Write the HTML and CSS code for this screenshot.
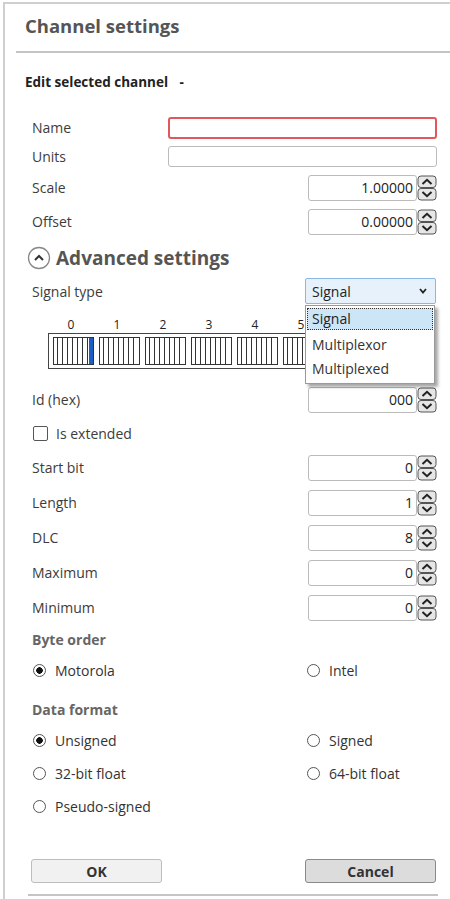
FILE: index.html
```html
<!DOCTYPE html>
<html lang="en">
<head>
  <meta charset="UTF-8">
  <title>Channel settings</title>
  <link rel="stylesheet" href="styles.css">
</head>
<body>
  <svg width="0" height="0" style="position:absolute">
    <symbol id="spin" viewBox="0 0 20 26">
      <rect x="1" y="1" width="18" height="11.5" rx="3" fill="#e6e6e6" stroke="#555"/>
      <path d="M5.5 9 L10 4.8 L14.5 9" stroke="#222" stroke-width="2" fill="none"/>
      <rect x="1" y="13.5" width="18" height="11.5" rx="3" fill="#e6e6e6" stroke="#555"/>
      <path d="M5.5 17 L10 21.2 L14.5 17" stroke="#222" stroke-width="2" fill="none"/>
    </symbol>
  </svg>

  <div class="panel">
    <div class="header"><h1>Channel settings</h1></div>
    <h2 class="subtitle">Edit selected channel <span class="dash">-</span></h2>

    <div class="body">
      <!-- Basic fields -->
      <div class="row row-name">
        <span class="label">Name</span>
        <div class="text invalid"></div>
      </div>
      <div class="row row-units">
        <span class="label">Units</span>
        <div class="text"></div>
      </div>
      <div class="row row-spin">
        <span class="label">Scale</span>
        <div class="spinner"><div class="spin-value">1.00000</div><svg class="spin-btn"><use href="#spin"/></svg></div>
      </div>
      <div class="row row-spin short">
        <span class="label">Offset</span>
        <div class="spinner"><div class="spin-value">0.00000</div><svg class="spin-btn"><use href="#spin"/></svg></div>
      </div>

      <!-- Advanced -->
      <div class="advanced">
        <svg class="collapse" width="24" height="24" viewBox="0 0 24 24">
          <circle cx="12" cy="12" r="10.5" fill="#fff" stroke="#888" stroke-width="1.3"/>
          <path d="M8 14 L12 10 L16 14" stroke="#333" stroke-width="2" fill="none"/>
        </svg>
        <span>Advanced settings</span>
      </div>

      <div class="row row-select">
        <span class="label">Signal type</span>
        <div class="select">
          <span>Signal</span>
          <svg width="8" height="6" viewBox="0 0 8 6"><path d="M1 1 L4 4.5 L7 1" stroke="#222" stroke-width="1.8" fill="none"/></svg>
          <ul class="options">
            <li class="active">Signal</li>
            <li>Multiplexor</li>
            <li>Multiplexed</li>
          </ul>
        </div>
      </div>

      <div class="bits">
        <div class="bit-numbers">
          <span>0</span><span>1</span><span>2</span><span>3</span><span>4</span><span>5</span><span>6</span><span>7</span>
        </div>
        <div class="bit-box" id="bitBox"></div>
      </div>

      <div class="row row-spin">
        <span class="label">Id (hex)</span>
        <div class="spinner"><div class="spin-value">000</div><svg class="spin-btn"><use href="#spin"/></svg></div>
      </div>
      <div class="row row-check">
        <span class="checkbox"></span>
        <span class="label">Is extended</span>
      </div>
      <div class="row row-spin">
        <span class="label">Start bit</span>
        <div class="spinner"><div class="spin-value">0</div><svg class="spin-btn"><use href="#spin"/></svg></div>
      </div>
      <div class="row row-spin">
        <span class="label">Length</span>
        <div class="spinner"><div class="spin-value">1</div><svg class="spin-btn"><use href="#spin"/></svg></div>
      </div>
      <div class="row row-spin">
        <span class="label">DLC</span>
        <div class="spinner"><div class="spin-value">8</div><svg class="spin-btn"><use href="#spin"/></svg></div>
      </div>
      <div class="row row-spin">
        <span class="label">Maximum</span>
        <div class="spinner"><div class="spin-value">0</div><svg class="spin-btn"><use href="#spin"/></svg></div>
      </div>
      <div class="row row-spin">
        <span class="label">Minimum</span>
        <div class="spinner"><div class="spin-value">0</div><svg class="spin-btn"><use href="#spin"/></svg></div>
      </div>

      <!-- Byte order -->
      <div class="group-title">Byte order</div>
      <div class="radio-grid">
        <label class="radio checked">Motorola</label>
        <label class="radio">Intel</label>
      </div>

      <!-- Data format -->
      <div class="group-title second">Data format</div>
      <div class="radio-grid tall">
        <label class="radio checked">Unsigned</label>
        <label class="radio">Signed</label>
        <label class="radio">32-bit float</label>
        <label class="radio">64-bit float</label>
        <label class="radio">Pseudo-signed</label>
      </div>

      <div class="buttons">
        <button class="btn">OK</button>
        <button class="btn btn-default">Cancel</button>
      </div>
    </div>
    <div class="footer-line"></div>
  </div>

  <script>
    // build the 8 bytes x 8 bits grid
    var box = document.getElementById('bitBox');
    for (var b = 0; b < 8; b++) {
      var cell = document.createElement('div');
      cell.className = 'byte';
      for (var i = 0; i < 8; i++) {
        var bit = document.createElement('span');
        bit.className = 'bit';
        if (b === 0 && i === 7) bit.className += ' on';
        cell.appendChild(bit);
      }
      box.appendChild(cell);
    }
  </script>
</body>
</html>
```

FILE: styles.css
```css
body {
  margin: 0;
  font-family: "Open Sans", "Noto Sans", Arial, sans-serif;
  font-size: 14px;
  color: #3a3a3a;
  background: #fff;
}
.panel {
  margin: 2px 0 0 3px;
  border-top: 2px solid #cfcfcf;
  border-left: 2px solid #cfcfcf;
  height: 897px;
  position: relative;
}
.header {
  margin-left: 11px;
  height: 47px;
  border-bottom: 2px solid #c4c4c4;
}
.header h1 {
  margin: 0;
  padding-left: 9px;
  font-size: 18.5px;
  line-height: 44px;
  color: #555;
}
.subtitle {
  margin: 0;
  padding-left: 20px;
  font-size: 13.5px;
  line-height: 59px;
  height: 59px;
  color: #222;
}
.subtitle .dash {
  margin-left: 8px;
}
.body {
  padding: 0 13px 0 27px;
}
.row {
  display: flex;
  align-items: center;
  justify-content: space-between;
  height: 35px;
}
.row-name {
  height: 31px;
}
.row-units {
  height: 27px;
}
.row.short {
  height: 33px;
}
.label {
  color: #3c3c3c;
}
.text {
  width: 267px;
  height: 19px;
  border: 1px solid #bbb;
  border-radius: 3px;
}
.text.invalid {
  border: 2px solid #e0585c;
  width: 265px;
  height: 18px;
}
.spinner {
  display: flex;
  align-items: center;
}
.spin-value {
  width: 104px;
  height: 24px;
  border: 1px solid #bbb;
  border-radius: 3px;
  text-align: right;
  padding-right: 3px;
  line-height: 24px;
  color: #222;
  font-size: 14px;
}
.spin-btn {
  width: 20px;
  height: 26px;
}
.advanced {
  display: flex;
  align-items: center;
  height: 40px;
  margin-left: -5px;
}
.advanced span {
  margin-left: 5px;
  font-size: 19px;
  font-weight: bold;
  color: #555;
}
.row-select {
  height: 26px;
}
.select {
  position: relative;
  width: 115px;
  height: 24px;
  border: 1px solid #88b8e6;
  border-radius: 2px;
  background: #e6f1fb;
  padding: 0 8px 0 6px;
  display: flex;
  align-items: center;
  justify-content: space-between;
  margin-right: 1px;
  color: #222;
}
.options {
  position: absolute;
  top: 26px;
  left: -1px;
  width: 128px;
  margin: 0;
  padding: 1px 0 2px;
  list-style: none;
  background: #fff;
  border: 1px solid #9a9a9a;
  box-shadow: 3px 3px 3px rgba(0,0,0,0.35);
  z-index: 2;
}
.options li {
  height: 24px;
  line-height: 24px;
  padding-left: 6px;
  color: #333;
}
.options li.active {
  height: 20px;
  line-height: 20px;
  margin: 1px 1px 3px;
  padding-left: 4px;
  background: #cde6f7;
  border: 1px dotted #333;
  color: #222;
}
.bits {
  margin-left: 16px;
  padding-top: 14px;
  height: 64px;
}
.bit-numbers {
  display: flex;
  padding-left: 5px;
  height: 15px;
}
.bit-numbers span {
  width: 46px;
  text-align: center;
  font-size: 12px;
  line-height: 14px;
  color: #222;
  margin-left: -5px;
  margin-right: 5px;
}
.bit-box {
  display: flex;
  gap: 5px;
  width: fit-content;
  border: 1.5px solid #444;
  padding: 3px 4px;
  height: 28px;
}
.byte {
  display: flex;
  border: 1px solid #333;
  border-right: none;
  height: 26px;
}
.bit {
  width: 3px;
  border-right: 1px solid #333;
  margin-right: 1px;
}
.bit:last-child {
  margin-right: 0;
  width: 4px;
}
.bit.on {
  background: #1b5fc4;
}
.row-check {
  justify-content: flex-start;
  height: 33px;
}
.checkbox {
  width: 13px;
  height: 13px;
  border: 1px solid #555;
  border-radius: 2px;
  margin: 0 8px 0 1px;
}
.group-title {
  height: 30px;
  line-height: 30px;
  font-weight: bold;
  color: #666;
}
.group-title.second {
  margin-top: 11px;
  height: 28px;
  line-height: 28px;
}
.radio-grid {
  display: grid;
  grid-template-columns: 274px 1fr;
  grid-auto-rows: 30px;
}
.radio-grid.tall {
  grid-auto-rows: 33px;
}
.radio {
  display: flex;
  align-items: center;
  color: #333;
}
.radio::before {
  content: "";
  width: 13px;
  height: 13px;
  border: 1px solid #555;
  border-radius: 50%;
  margin: 0 9px 0 1px;
  box-sizing: border-box;
  background: #fff;
}
.radio.checked::before {
  background: radial-gradient(circle, #111 0 3px, #fff 3.5px);
}
.buttons {
  display: flex;
  justify-content: space-between;
  margin-top: 36px;
}
.btn {
  width: 131px;
  height: 24px;
  border: 1px solid #bdbdbd;
  border-radius: 3px;
  background: #f1f1f1;
  font-family: inherit;
  font-size: 14px;
  font-weight: bold;
  color: #333;
  margin-left: -1px;
  padding: 0;
}
.btn-default {
  background: #dcdcdc;
  border-color: #8a8a8a;
  margin-right: 1px;
}
.footer-line {
  position: absolute;
  left: 23px;
  width: 410px;
  top: 890px;
  border-top: 2px solid #c4c4c4;
}
```
